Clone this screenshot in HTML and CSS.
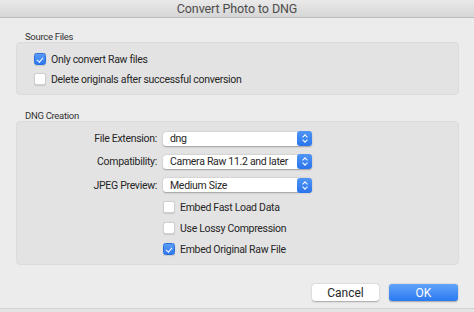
FILE: index.html
```html
<!DOCTYPE html>
<html lang="en">
<head>
    <meta charset="UTF-8">
    <title>Convert Photo to DNG</title>
    <link rel="stylesheet" href="styles.css">
</head>
<body>
    <div class="dialog">
        <div class="titlebar">Convert Photo to DNG</div>

        <div class="content">
            <div class="group-label">Source Files</div>
            <div class="group source">
                <label class="check"><span class="box checked"></span>Only convert Raw files</label>
                <label class="check"><span class="box"></span>Delete originals after successful conversion</label>
            </div>

            <div class="group-label second">DNG Creation</div>
            <div class="group creation">
                <div class="field">
                    <span class="field-label">File Extension:</span>
                    <div class="popup"><span>dng</span><span class="stepper"></span></div>
                </div>
                <div class="field">
                    <span class="field-label">Compatibility:</span>
                    <div class="popup"><span>Camera Raw 11.2 and later</span><span class="stepper"></span></div>
                </div>
                <div class="field">
                    <span class="field-label">JPEG Preview:</span>
                    <div class="popup"><span>Medium Size</span><span class="stepper"></span></div>
                </div>
                <label class="check indent"><span class="box"></span>Embed Fast Load Data</label>
                <label class="check indent"><span class="box"></span>Use Lossy Compression</label>
                <label class="check indent"><span class="box checked"></span>Embed Original Raw File</label>
            </div>

            <div class="buttons">
                <button class="btn">Cancel</button>
                <button class="btn primary">OK</button>
            </div>
        </div>
    </div>
</body>
</html>
```

FILE: styles.css
```css
body {
    margin: 0;
    background: #e4e4e4;
    font-family: Roboto, 'Liberation Sans', Arial, sans-serif;
    color: #262626;
    letter-spacing: -0.3px;
}
.dialog {
    width: 474px;
    height: 308px;
    background: #ececec;
    border-bottom: 1px solid #d2d2d2;
}
.titlebar {
    height: 17px;
    line-height: 17px;
    text-align: center;
    font-size: 12.5px;
    letter-spacing: -0.1px;
    color: #4d4d4d;
    background: linear-gradient(#e9e9e9, #d6d6d6);
    border-bottom: 1px solid #bdbdbd;
}
.content {
    padding: 0 15px 0 16px;
}
.group-label {
    font-size: 9.5px;
    color: #333;
    padding-left: 9px;
    margin-top: 15px;
    height: 8px;
    line-height: 8px;
}
.group-label.second {
    margin-top: 17px;
}
.group {
    margin-top: 1px;
    background: #e3e3e3;
    border: 1px solid #dcdcdc;
    border-radius: 4px;
}
.source {
    height: 53px;
    box-sizing: border-box;
    padding: 6px 0 0 17px;
}
.creation {
    height: 144px;
    box-sizing: border-box;
    padding-top: 5px;
}
.check {
    display: flex;
    align-items: center;
    gap: 5px;
    height: 20px;
    font-size: 10.5px;
    white-space: nowrap;
}
.creation .check {
    height: 21px;
}
.check.indent {
    padding-left: 146px;
}
.box {
    width: 10px;
    height: 10px;
    border-radius: 2.5px;
    background: #fff;
    border: 0.5px solid #cfcfcf;
    box-shadow: 0 0.5px 1px rgba(0, 0, 0, 0.12);
    display: flex;
    align-items: center;
    justify-content: center;
}
.box.checked {
    background: linear-gradient(#5b9cf8, #2e78ef);
    border-color: #2a6fdc;
}
.box.checked::after {
    content: "";
    width: 2.5px;
    height: 5px;
    border: solid #fff;
    border-width: 0 1.5px 1.5px 0;
    transform: rotate(40deg);
    margin-top: -1px;
}
.field {
    display: grid;
    grid-template-columns: 140px 149px;
    column-gap: 6px;
    align-items: center;
    height: 23.3px;
    font-size: 10.5px;
    white-space: nowrap;
}
.field-label {
    text-align: right;
}
.popup {
    height: 14px;
    background: #fff;
    border-radius: 3px;
    box-shadow: 0 0.5px 1.5px rgba(0, 0, 0, 0.3);
    display: flex;
    align-items: center;
    justify-content: space-between;
    padding-left: 7px;
}
.stepper {
    width: 15px;
    height: 15px;
    border-radius: 3px;
    background: linear-gradient(#4f95f6, #2a74ec);
    position: relative;
}
.stepper::before,
.stepper::after {
    content: "";
    position: absolute;
    left: 5.5px;
    width: 3px;
    height: 3px;
    border: solid #fff;
    border-width: 1.2px 1.2px 0 0;
}
.stepper::before {
    top: 4px;
    transform: rotate(-45deg);
}
.stepper::after {
    top: 7px;
    transform: rotate(135deg);
}
.buttons {
    display: flex;
    justify-content: flex-end;
    gap: 10px;
    margin-top: 19px;
    padding-right: 1px;
}
.btn {
    height: 17px;
    width: 67px;
    padding: 0;
    border: none;
    border-radius: 3px;
    background: #fff;
    box-shadow: 0 0.5px 1.5px rgba(0, 0, 0, 0.3);
    font-family: Roboto, 'Liberation Sans', Arial, sans-serif;
    font-size: 12px;
    color: #262626;
}
.btn.primary {
    width: 69px;
    color: #fff;
    background: linear-gradient(#62a4f9, #2a79f0);
}
```
